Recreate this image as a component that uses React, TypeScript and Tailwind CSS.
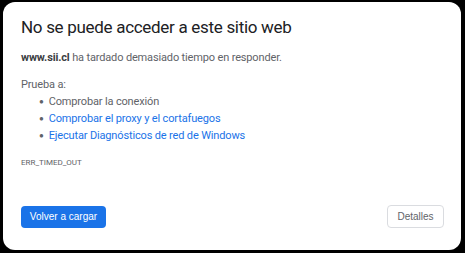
const App = () => {
  return (
    <div className="w-[465px] h-[253px] bg-black pt-[2px] pl-[3px] pr-[4px] pb-[3px]">
      <div className="h-full bg-white rounded-[12px] pl-[18px] pr-[17px] pt-[12px] pb-[22px] flex flex-col font-['Roboto',sans-serif]">
        <h1 className="text-[17px] leading-[26px] tracking-[-0.3px] text-[#202124] font-normal">
          No se puede acceder a este sitio web
        </h1>
        <p className="mt-[10px] text-[11px] leading-[16px] tracking-[-0.15px] text-[#5f6368]">
          <span className="font-bold text-[#3c4043]">www.sii.cl</span> ha tardado demasiado tiempo en responder.
        </p>
        <p className="mt-[11px] text-[11px] leading-[16px] tracking-[-0.15px] text-[#5f6368]">Prueba a:</p>
        <ul className="pl-[18px] text-[11px] leading-[17px] tracking-[-0.15px] text-[#5f6368]">
          <li className="flex items-center gap-[5px]">
            <span className="text-[8px]">●</span>
            <span>Comprobar la conexión</span>
          </li>
          <li className="flex items-center gap-[5px]">
            <span className="text-[8px]">●</span>
            <span className="text-[#1a73e8]">Comprobar el proxy y el cortafuegos</span>
          </li>
          <li className="flex items-center gap-[5px]">
            <span className="text-[8px]">●</span>
            <span className="text-[#1a73e8]">Ejecutar Diagnósticos de red de Windows</span>
          </li>
        </ul>
        <p className="mt-[13px] text-[8px] leading-[12px] text-[#5f6368]">ERR_TIMED_OUT</p>
        <div className="mt-auto flex items-center justify-between">
          <button className="h-[22px] w-[85px] rounded-[4px] bg-[#1a73e8] text-white text-[10px] font-['Liberation_Sans',Arial,sans-serif]">
            Volver a cargar
          </button>
          <button className="h-[23px] w-[57px] rounded-[4px] border border-[#dadce0] text-[#5f6368] text-[10px] font-['Liberation_Sans',Arial,sans-serif]">
            Detalles
          </button>
        </div>
      </div>
    </div>
  );
};

export default App;
